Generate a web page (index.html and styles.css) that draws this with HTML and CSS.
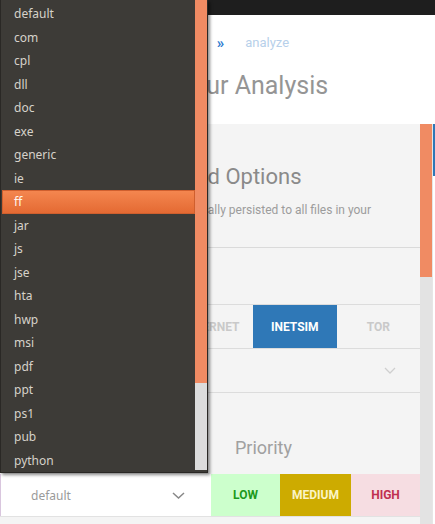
FILE: index.html
```html
<!DOCTYPE html>
<html lang="en">
<head>
    <meta charset="UTF-8">
    <meta name="viewport" content="width=device-width, initial-scale=1.0">
    <title>Configure Your Analysis</title>
    <link rel="stylesheet" href="styles.css">
</head>
<body>
    <div class="topbar"></div>
    <header class="page-head">
        <nav class="crumbs">
            <a class="crumb" href="#">dashboard</a>
            <span class="crumb-sep">&raquo;</span>
            <span class="crumb-current">analyze</span>
        </nav>
        <h1>Configure Your Analysis</h1>
    </header>
    <div class="content">
        <section class="panel">
            <h2>Advanced Options</h2>
            <p class="lead">These options are globally persisted to all files in your</p>
            <hr>
            <div class="routes">
                <button class="route">NONE</button>
                <button class="route">INTERNET</button>
                <button class="route active">INETSIM</button>
                <button class="route">TOR</button>
            </div>
            <div class="select-row">
                <svg class="chevron light" width="12" height="7" viewBox="0 0 12 7"><polyline points="1,1 6,6 11,1" fill="none" stroke="currentColor" stroke-width="1.3"/></svg>
            </div>
            <div class="pri-labels">
                <span class="pri-label">Priority</span>
            </div>
            <div class="pri-row">
                <div class="pkg-select">
                    <span>default</span>
                    <svg class="chevron" width="13" height="7" viewBox="0 0 13 7"><polyline points="1,1 6.5,6 12,1" fill="none" stroke="currentColor" stroke-width="1.5"/></svg>
                </div>
                <div class="pri-buttons">
                    <button class="pri low">LOW</button>
                    <button class="pri medium">MEDIUM</button>
                    <button class="pri high">HIGH</button>
                </div>
            </div>
        </section>
        <div class="scrollbar"><div class="scroll-thumb"></div></div>
        <div class="edge"><div class="edge-bar"></div></div>
    </div>

    <div class="dropdown">
        <ul class="options">
            <li>default</li>
            <li>com</li>
            <li>cpl</li>
            <li>dll</li>
            <li>doc</li>
            <li>exe</li>
            <li>generic</li>
            <li>ie</li>
            <li class="selected">ff</li>
            <li>jar</li>
            <li>js</li>
            <li>jse</li>
            <li>hta</li>
            <li>hwp</li>
            <li>msi</li>
            <li>pdf</li>
            <li>ppt</li>
            <li>ps1</li>
            <li>pub</li>
            <li>python</li>
        </ul>
        <div class="dd-scroll"><div class="dd-thumb"></div></div>
    </div>
</body>
</html>
```
FILE: styles.css
```css
body {
    font-family: Roboto, "Liberation Sans", sans-serif;
    margin: 0;
    padding: 0;
    background-color: #fff;
    color: #999;
    overflow: hidden;
}
.topbar {
    height: 15px;
    background: #1e1e1e;
}
.page-head {
    height: 109px;
    padding: 19px 0 0 0;
    box-sizing: border-box;
}
.crumbs {
    display: flex;
    align-items: center;
    gap: 21px;
    padding-left: 134px;
    font-size: 13px;
    line-height: 18px;
}
.crumb {
    color: #2d7bcf;
    text-decoration: none;
}
.crumb-sep {
    color: #2d7bcf;
    font-weight: bold;
    font-size: 15px;
}
.crumb-current {
    color: #b7d0ea;
}
h1 {
    margin: 19px 0 0 0;
    padding-left: 64px;
    font-size: 25px;
    line-height: 30px;
    font-weight: 400;
    color: #959595;
}
.content {
    display: flex;
    height: 400px;
}
.panel {
    width: 420px;
    background: #f4f4f4;
    padding-top: 40px;
    box-sizing: border-box;
}
h2 {
    margin: 0;
    padding-left: 123px;
    font-size: 22px;
    line-height: 26px;
    font-weight: 400;
    color: #8a8a8a;
}
.lead {
    margin: 12px 0 0 0;
    padding-left: 86px;
    height: 32px;
    font-size: 12px;
    line-height: 16px;
    white-space: nowrap;
    color: #9c9c9c;
}
hr {
    margin: 13px 0 0 0;
    border: 0;
    border-top: 1px solid #dadada;
}
.routes {
    display: flex;
    justify-content: flex-end;
    margin-top: 56px;
    border-top: 1px solid #dcdcdc;
    border-bottom: 1px solid #dcdcdc;
}
.route {
    width: 83.5px;
    height: 43px;
    border: 0;
    background: transparent;
    font-family: Roboto, sans-serif;
    font-size: 12px;
    font-weight: bold;
    color: #c9c9c9;
    padding: 0;
}
.route.active {
    background: #2f78b7;
    color: #fff;
}
.select-row {
    display: flex;
    justify-content: flex-end;
    align-items: center;
    height: 43px;
    padding-right: 24px;
    border-bottom: 1px solid #dcdcdc;
}
.chevron {
    display: block;
    color: #888;
}
.chevron.light {
    color: #cfcfcf;
}
.pri-labels {
    display: flex;
    margin-top: 44px;
    padding-left: 211px;
    font-size: 18px;
    line-height: 22px;
    color: #a0a0a0;
}
.pri-label {
    padding-left: 24px;
}
.pri-row {
    display: flex;
    margin-top: 15px;
    height: 42px;
    border-bottom: 1px solid #e2e2e2;
}
.pkg-select {
    width: 211px;
    box-sizing: border-box;
    display: flex;
    align-items: center;
    justify-content: space-between;
    padding: 0 26px 0 30px;
    background: #fff;
    border-left: 1px solid #d9c6de;
    font-family: "Noto Sans", sans-serif;
    font-size: 12px;
    color: #9a9a9a;
}
.pri-buttons {
    flex: 1;
    display: grid;
    grid-template-columns: 69px 71px 1fr;
}
.pri {
    border: 0;
    padding: 0;
    font-family: Roboto, sans-serif;
    font-size: 12px;
    font-weight: bold;
}
.pri.low {
    background: #ccffcc;
    color: #1c9a1c;
}
.pri.medium {
    background: #cdab00;
    color: #fbf4c6;
}
.pri.high {
    background: #f6dde2;
    color: #c0304f;
}
.scrollbar {
    width: 12px;
    background: #e3e3e3;
}
.scroll-thumb {
    height: 153px;
    background: #f08b63;
}
.edge {
    width: 3px;
    background: #fff;
    border-left: 1px solid #e6e6e6;
    box-sizing: border-box;
}
.edge-bar {
    height: 52px;
    background: #2f78b7;
}

/* open package list */
.dropdown {
    position: absolute;
    top: 0;
    left: 0;
    width: 208px;
    height: 473px;
    display: flex;
    background: #3d3b37;
    border-left: 1px solid #2a2825;
    border-right: 1px solid #2a2825;
    border-bottom: 1px solid #2a2825;
    box-sizing: border-box;
    box-shadow: 2px 2px 3px rgba(0, 0, 0, 0.45);
}
.options {
    flex: 1;
    list-style: none;
    margin: 0;
    padding: 2px 0 0 1px;
    font-family: "Noto Sans", sans-serif;
    font-size: 12px;
}
.options li {
    height: 23.5px;
    line-height: 23.5px;
    padding-left: 12px;
    color: #d6d2ca;
    box-sizing: border-box;
}
.options li.selected {
    background: linear-gradient(#f4864f, #e46a33);
    border: 1px solid #cf5f2e;
    line-height: 21.5px;
    padding-left: 11px;
    color: #fff6ee;
}
.dd-scroll {
    width: 12px;
    background: #dcdcdc;
    margin-bottom: 2px;
}
.dd-thumb {
    height: 383px;
    background: #f08b63;
}
```
